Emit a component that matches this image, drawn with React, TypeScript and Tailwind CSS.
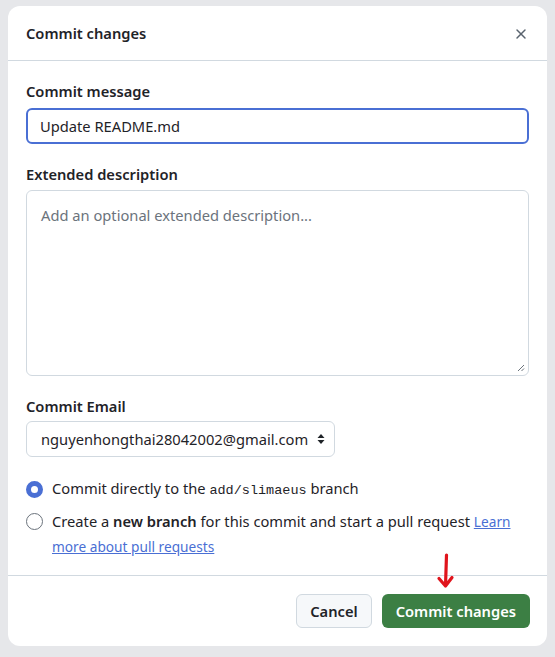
import { X } from 'lucide-react';

export default function App() {
  return (
    <div className="min-h-screen w-full bg-[#e6e7ea] pt-[6px] pl-[8px] pr-[8px] font-['Noto_Sans',sans-serif] text-[#1f2328]">
      <div className="w-[539px] h-[640px] rounded-[12px] bg-white flex flex-col overflow-hidden">
        {/* header */}
        <div className="h-[55px] shrink-0 flex items-center justify-between pl-[18px] pr-[18px] pt-[1px] border-b border-[#d1d9e0]">
          <h1 className="text-[14.7px] font-semibold">Commit changes</h1>
          <X className="w-[16px] h-[16px] text-[#59636e]" strokeWidth={2.2} />
        </div>

        {/* body */}
        <div className="flex-1 px-[18px] pt-[20px] text-[14.7px]">
          <label className="block font-semibold leading-[20px]">Commit message</label>
          <div className="mt-[7px] h-[36px] rounded-[6px] border-2 border-[#4a6fd4] flex items-center px-[12px]">
            Update README.md
          </div>

          <label className="block mt-[20px] font-semibold leading-[20px]">Extended description</label>
          <div className="relative mt-[6px] h-[186px] rounded-[6px] border border-[#d1d9e0] px-[14px] pt-[13px] text-[#6b737c]">
            Add an optional extended description...
            <svg className="absolute right-[3px] bottom-[3px]" width="8" height="8" viewBox="0 0 8 8">
              <path d="M7 1L1 7M7 4.5L4.5 7" stroke="#6b737c" strokeWidth="1" />
            </svg>
          </div>

          <label className="block mt-[20px] font-semibold leading-[20px]">Commit Email</label>
          <div className="mt-[5px] w-[309px] h-[36px] rounded-[6px] border border-[#d1d9e0] flex items-center justify-between pl-[14px] pr-[9px]">
            <span>nguyenhongthai28042002@gmail.com</span>
            <svg width="8" height="12" viewBox="0 0 8 12">
              <path d="M4 1L7.5 5H0.5Z M4 11L7.5 7H0.5Z" fill="#1f2328" />
            </svg>
          </div>

          <div className="mt-[20px] flex items-center gap-[9px]">
            <span className="w-[17px] h-[17px] rounded-full border-[5px] border-[#4a6fd4] bg-white shrink-0" />
            <span>
              Commit directly to the{' '}
              <code className="font-['Liberation_Mono',monospace] text-[13.5px]">add/slimaeus</code> branch
            </span>
          </div>

          <div className="mt-[8px] flex items-start gap-[9px] leading-[25px]">
            <span className="mt-[4px] w-[17px] h-[17px] rounded-full border border-[#6b737c] bg-white shrink-0" />
            <p>
              Create a <b className="font-semibold">new branch</b> for this commit and start a pull request{' '}
              <a className="text-[#4a6fd4] underline text-[13.7px]">Learn more about pull requests</a>
            </p>
          </div>
        </div>

        {/* footer */}
        <div className="relative h-[71px] shrink-0 border-t border-[#d1d9e0] flex items-center justify-end gap-[10px] pr-[17px]">
          <button className="h-[34px] px-[13px] rounded-[6px] border border-[#d1d9e0] bg-[#f6f8fa] text-[14.7px] font-semibold">
            Cancel
          </button>
          <button className="h-[34px] px-[14px] rounded-[6px] bg-[#3c7f44] text-white text-[14.7px] font-semibold">
            Commit changes
          </button>
          <svg className="absolute left-[428px] top-[-23px]" width="20" height="38" viewBox="0 0 20 38">
            <path d="M10.5 2L9.5 33M3 25.5L9.5 33L16 24.5" stroke="#e0141c" strokeWidth="3.2" fill="none" strokeLinecap="round" strokeLinejoin="round" />
          </svg>
        </div>
      </div>
    </div>
  );
}
